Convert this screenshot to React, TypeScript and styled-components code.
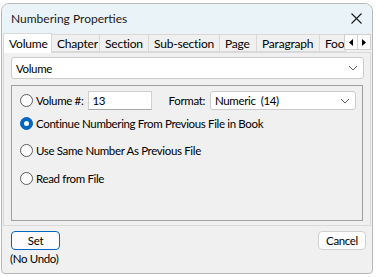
import React from 'react';
import styled, { createGlobalStyle } from 'styled-components';

const GlobalStyle = createGlobalStyle`
  html, body {
    margin: 0;
    padding: 0;
    background: #ffffff;
    font-family: Lato, "Open Sans", sans-serif;
    font-size: 11.5px;
    letter-spacing: -0.35px;
    color: #000000;
  }
`;

const Page = styled.div`
  width: 377px;
  height: 277px;
  padding: 3px 0 0 1px;
  box-sizing: border-box;
  background: #ffffff;
`;

const Window = styled.div`
  width: 372px;
  height: 271px;
  box-sizing: border-box;
  border: 1px solid #b9b9b9;
  border-radius: 8px 8px 4px 4px;
  background: #f0f0f0;
  display: flex;
  flex-direction: column;
  overflow: hidden;
`;

const TitleBar = styled.div`
  height: 29px;
  display: flex;
  align-items: center;
  justify-content: space-between;
  padding: 0 10px 0 9px;
  background: #eaf3f7;
`;

const Title = styled.span`
  font-size: 12px;
  letter-spacing: 0;
  color: #1a1a1a;
`;

const TabStrip = styled.div`
  height: 19px;
  display: flex;
  align-items: flex-end;
  padding-left: 1px;
  position: relative;
  z-index: 1;
`;

const Tab = styled.div<{ active?: boolean; w: number }>`
  width: ${(p) => p.w}px;
  height: ${(p) => (p.active ? 20 : 18)}px;
  margin-bottom: ${(p) => (p.active ? -1 : 0)}px;
  box-sizing: border-box;
  display: flex;
  align-items: center;
  padding-left: 5px;
  white-space: nowrap;
  overflow: hidden;
  background: ${(p) => (p.active ? '#ffffff' : '#f0f0f0')};
  border: 1px solid #d9d9d9;
  border-bottom: ${(p) => (p.active ? 'none' : '1px solid #d9d9d9')};
  margin-right: -1px;
  font-size: 12px;
  letter-spacing: -0.2px;
`;

const Arrows = styled.div`
  display: flex;
  margin-left: auto;
  margin-bottom: 2px;
  margin-right: 1px;
`;

const ArrowBtn = styled.div`
  width: 14px;
  height: 16px;
  box-sizing: border-box;
  border: 1px solid #cfcfcf;
  background: #fdfdfd;
  display: flex;
  align-items: center;
  justify-content: center;
  margin-left: -1px;
`;

const TabPanel = styled.div`
  margin: 0 1px 0 1px;
  height: 174px;
  box-sizing: border-box;
  border: 1px solid #d9d9d9;
  padding: 4px 6px 0 7px;
  display: flex;
  flex-direction: column;
`;

const Select = styled.div<{ w?: number; h: number }>`
  width: ${(p) => (p.w ? `${p.w}px` : 'auto')};
  height: ${(p) => p.h}px;
  box-sizing: border-box;
  background: #ffffff;
  border: 1px solid #cccccc;
  border-radius: 3px;
  display: flex;
  align-items: center;
  justify-content: space-between;
  padding: 0 5px 0 4px;
`;

const GroupBox = styled.div`
  margin-top: 6px;
  margin-right: 1px;
  height: 136px;
  box-sizing: border-box;
  border: 1px solid #a0a0a0;
  padding: 5px 6px 0 8px;
  display: flex;
  flex-direction: column;
`;

const Row = styled.div<{ top: number }>`
  height: 19px;
  margin-top: ${(p) => p.top}px;
  display: flex;
  align-items: center;
`;

const Radio = styled.span<{ checked?: boolean }>`
  width: 13px;
  height: 13px;
  box-sizing: border-box;
  border-radius: 50%;
  flex: none;
  margin-right: 3px;
  background: ${(p) => (p.checked ? '#0067c0' : '#ffffff')};
  border: 1px solid ${(p) => (p.checked ? '#0067c0' : '#5c5c5c')};
  display: flex;
  align-items: center;
  justify-content: center;
  &::after {
    content: '';
    display: ${(p) => (p.checked ? 'block' : 'none')};
    width: 5px;
    height: 5px;
    border-radius: 50%;
    background: #ffffff;
  }
`;

const Label = styled.span<{ gap?: number; lead?: number }>`
  margin-right: ${(p) => p.gap ?? 0}px;
  margin-left: ${(p) => p.lead ?? 0}px;
  white-space: nowrap;
`;

const TextInput = styled.div`
  width: 64px;
  height: 19px;
  box-sizing: border-box;
  background: #ffffff;
  border: 1px solid #d0d0d0;
  border-bottom-color: #a8a8a8;
  padding-left: 3px;
  display: flex;
  align-items: center;
`;

const Footer = styled.div`
  flex: 1;
  display: flex;
  justify-content: space-between;
  align-items: flex-start;
  padding: 5px 6px 0 8px;
`;

const FooterLeft = styled.div`
  display: flex;
  flex-direction: column;
  align-items: flex-start;
`;

const Button = styled.div<{ primary?: boolean; w: number }>`
  width: ${(p) => p.w}px;
  height: 19px;
  box-sizing: border-box;
  border-radius: 4px;
  background: #fdfdfd;
  border: ${(p) => (p.primary ? '1.5px solid #0067c0' : '1px solid #d0d0d0')};
  display: flex;
  align-items: center;
  justify-content: center;
  margin-left: ${(p) => (p.primary ? 1 : 0)}px;
`;

const Note = styled.span`
  margin-top: 2px;
`;

const Chevron = () => (
  <svg width="10" height="6" viewBox="0 0 10 6">
    <path d="M1 1 L5 5 L9 1" fill="none" stroke="#606060" strokeWidth="1" />
  </svg>
);

const tabs: [string, number][] = [
  ['Volume', 49],
  ['Chapter', 49],
  ['Section', 50],
  ['Sub-section', 72],
  ['Page', 38],
  ['Paragraph', 64],
  ['Footnote', 27],
];

export default function App() {
  return (
    <Page>
      <GlobalStyle />
      <Window>
        <TitleBar>
          <Title>Numbering Properties</Title>
          <svg width="11" height="11" viewBox="0 0 11 11">
            <path d="M0.5 0.5 L10.5 10.5 M10.5 0.5 L0.5 10.5" stroke="#1a1a1a" strokeWidth="1.1" />
          </svg>
        </TitleBar>
        <TabStrip>
          {tabs.map(([t, w], i) => (
            <Tab key={t} w={w} active={i === 0}>
              {t}
            </Tab>
          ))}
          <Arrows>
            <ArrowBtn>
              <svg width="4" height="7" viewBox="0 0 4 7">
                <path d="M4 0 L0 3.5 L4 7 Z" fill="#000" />
              </svg>
            </ArrowBtn>
            <ArrowBtn>
              <svg width="4" height="7" viewBox="0 0 4 7">
                <path d="M0 0 L4 3.5 L0 7 Z" fill="#000" />
              </svg>
            </ArrowBtn>
          </Arrows>
        </TabStrip>
        <TabPanel>
          <Select h={22}>
            <span>Volume</span>
            <Chevron />
          </Select>
          <GroupBox>
            <Row top={0}>
              <Radio />
              <Label gap={5}>Volume #:</Label>
              <TextInput>13</TextInput>
              <Label gap={5} lead={17}>Format:</Label>
              <Select w={148} h={19}>
                <span>Numeric&nbsp; (14)</span>
                <Chevron />
              </Select>
            </Row>
            <Row top={4}>
              <Radio checked />
              <Label>Continue Numbering From Previous File in Book</Label>
            </Row>
            <Row top={8}>
              <Radio />
              <Label>Use Same Number As Previous File</Label>
            </Row>
            <Row top={9}>
              <Radio />
              <Label>Read from File</Label>
            </Row>
          </GroupBox>
        </TabPanel>
        <Footer>
          <FooterLeft>
            <Button primary w={49}>Set</Button>
            <Note>(No Undo)</Note>
          </FooterLeft>
          <Button w={48}>Cancel</Button>
        </Footer>
      </Window>
    </Page>
  );
}
